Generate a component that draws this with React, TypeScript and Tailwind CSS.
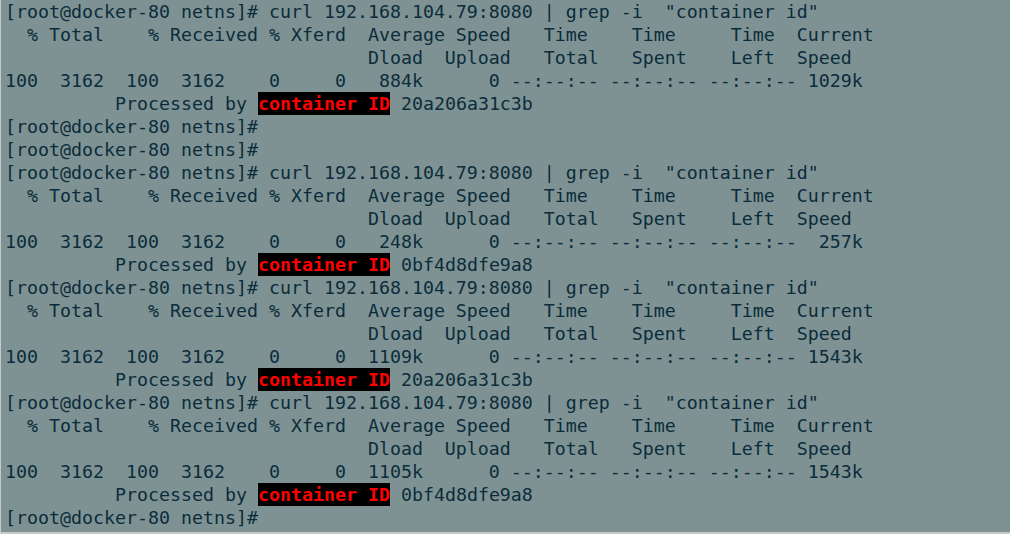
const PROMPT = "[root@docker-80 netns]#";
const CMD = `${PROMPT} curl 192.168.104.79:8080 | grep -i  "container id"`;
const HEAD1 = "  % Total    % Received % Xferd  Average Speed   Time    Time     Time  Current";
const HEAD2 = "                                 Dload  Upload   Total   Spent    Left  Speed";

type Run = { dload: string; speed: string; id: string };

const runs: Run[] = [
  { dload: " 884k", speed: "1029k", id: "20a206a31c3b" },
  { dload: " 248k", speed: " 257k", id: "0bf4d8dfe9a8" },
  { dload: "1109k", speed: "1543k", id: "20a206a31c3b" },
  { dload: "1105k", speed: "1543k", id: "0bf4d8dfe9a8" },
];

function Line({ children }: { children?: React.ReactNode }) {
  return <div className="h-[23px] leading-[23px] whitespace-pre">{children}</div>;
}

function Processed({ id }: { id: string }) {
  return (
    <Line>
      {"          Processed by "}
      <span className="inline-block h-[23px] bg-black font-bold text-[#ff0000]">container ID</span>
      {" " + id}
    </Line>
  );
}

function Block({ run }: { run: Run }) {
  return (
    <>
      <Line>{CMD}</Line>
      <Line>{HEAD1}</Line>
      <Line>{HEAD2}</Line>
      <Line>{`100  3162  100  3162    0     0  ${run.dload}      0 --:--:-- --:--:-- --:--:-- ${run.speed}`}</Line>
      <Processed id={run.id} />
    </>
  );
}

export default function App() {
  return (
    <div className="h-[534px] w-[1010px] overflow-hidden border-l border-b-2 border-[#c3cacb] bg-[#7f9293]">
      <div className="pl-[4px] font-['DejaVu_Sans_Mono','Liberation_Mono',monospace] text-[18.27px] text-[#0a2c3b]">
        <Block run={runs[0]} />
        <Line>{PROMPT}</Line>
        <Line>{PROMPT}</Line>
        <Block run={runs[1]} />
        <Block run={runs[2]} />
        <Block run={runs[3]} />
        <Line>{PROMPT}</Line>
      </div>
    </div>
  );
}
